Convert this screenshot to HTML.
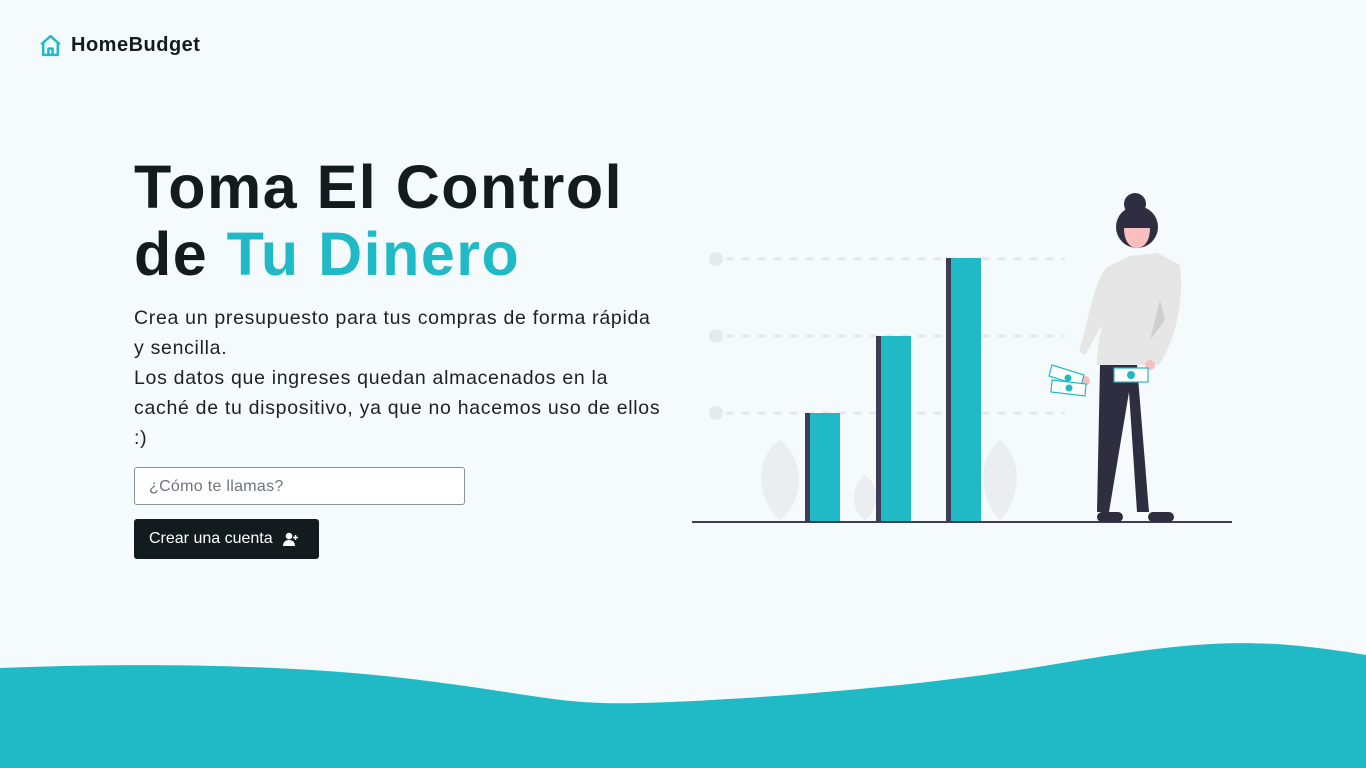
<!DOCTYPE html>
<html><head><meta charset="utf-8"><style>
*{margin:0;padding:0;box-sizing:border-box}
body{width:1366px;height:768px;overflow:hidden;background:#f5fbfc;font-family:"Liberation Sans",sans-serif;color:#121c1e;position:relative}
.logo{position:absolute;left:38px;top:33px;display:flex;align-items:center;gap:8px;font-weight:bold;font-size:20px;letter-spacing:0.5px}
h1{position:absolute;left:134px;top:154px;font-size:61px;line-height:67px;font-weight:bold;letter-spacing:1.5px;white-space:nowrap}
h1 span{color:#1fbac6}
p{position:absolute;left:134px;top:303px;font-size:19.5px;line-height:30px;white-space:nowrap;color:#1a2224;letter-spacing:0.7px}
.inp{position:absolute;left:134px;top:467px;width:331px;height:38px;border:1px solid #8a9497;border-radius:3px;background:#fff;font-size:16px;color:#6c757d;padding:10px 14px;letter-spacing:0.3px}
.btn{position:absolute;left:134px;top:519px;width:185px;height:40px;background:#121c1e;border-radius:3px;color:#fff;font-size:16px;padding:0 15px;display:flex;gap:10px;align-items:center;white-space:nowrap}
</style></head><body>
<div class="logo"><svg width="25" height="25" viewBox="0 0 24 24" fill="none" stroke="#1fbac6" stroke-width="2.4" stroke-linejoin="round"><path d="M3 11L12 3l9 8M5 9.5V21h14V9.5M10 21v-6h4v6"/></svg>HomeBudget</div>
<h1>Toma El Control<br>de <span>Tu Dinero</span></h1>
<p>Crea un presupuesto para tus compras de forma rápida<br>y sencilla.<br>Los datos que ingreses quedan almacenados en la<br>caché de tu dispositivo, ya que no hacemos uso de ellos<br>:)</p>
<div class="inp">¿Cómo te llamas?</div>
<div class="btn"><span>Crear una cuenta</span><svg width="16" height="14" viewBox="0 0 16 14" fill="#fff"><circle cx="6" cy="4" r="3.3"/><path d="M0 14c0-4 2.5-6 6-6s6 2 6 6z"/><path d="M12.5 3v5M10 5.5h5" stroke="#fff" stroke-width="1.4"/></svg></div>
<svg style="position:absolute;left:0;top:0" width="1366" height="768">
<path d="M0 668C150 662 300 665 420 680S560 705 640 703S900 690 1050 665S1250 636 1366 655V768H0Z" fill="#1fbac6"/>
<g fill="#ebeef0"><path d="M780 520c-25-20-25-65 0-80 25 20 25 60 0 80z"/><path d="M865 520c-15-10-15-35 0-45 15 10 15 35 0 45z"/><path d="M1000 520c-20-20-25-60 0-80 25 20 20 60 0 80z"/></g>
<g stroke="#e6e9ed" stroke-width="3" stroke-dasharray="8 8"><path d="M726 259H1065M726 336H1065M726 413H1065"/></g>
<g fill="#e6e9ed"><circle cx="716" cy="259" r="7"/><circle cx="716" cy="336" r="7"/><circle cx="716" cy="413" r="7"/></g>
<g fill="#3f3d56"><rect x="805" y="413" width="6" height="109"/><rect x="876" y="336" width="6" height="186"/><rect x="946" y="258" width="6" height="264"/></g>
<g fill="#1fbac6"><rect x="810" y="413" width="30" height="109"/><rect x="881" y="336" width="30" height="186"/><rect x="951" y="258" width="30" height="264"/></g>
<path d="M692 522H1232" stroke="#3f3d56" stroke-width="2"/>
<g>
<path d="M1100 365l-3 147h12l20-120 8 120h12l-12-147z" fill="#2f2e41"/>
<rect x="1097" y="512" width="26" height="10" rx="5" fill="#2f2e41"/><rect x="1148" y="512" width="26" height="10" rx="5" fill="#2f2e41"/>
<circle cx="1135" cy="204" r="11" fill="#2f2e41"/>
<circle cx="1137" cy="227" r="21" fill="#2f2e41"/>
<path d="M1124 228h26c0 12-5 20-13 20s-13-8-13-20z" fill="#fbbebe"/>
<path d="M1130 256l28-3 22 12c3 25 0 60-15 90l-6 10h-62c0-20 5-40 5-40l-17 30-6-3c10-35 15-70 28-85z" fill="#e6e6e6"/>
<path d="M1160 300l-10 40 15-20z" fill="#cfcfcf"/>
<circle cx="1085" cy="381" r="5" fill="#fbbebe"/><circle cx="1150" cy="365" r="5" fill="#fbbebe"/>
<g stroke="#1fbac6" stroke-width="1.2" fill="#fff"><rect x="1114" y="368" width="34" height="14"/><path d="M1052 365l32 10-3 11-32-10z"/><path d="M1052 380l34 4-1 12-34-4z"/></g>
<g fill="#1fbac6"><circle cx="1131" cy="375" r="4"/><circle cx="1068" cy="378" r="3.5"/><circle cx="1069" cy="388" r="3.5"/></g>
</g>
</svg>
</body></html>
